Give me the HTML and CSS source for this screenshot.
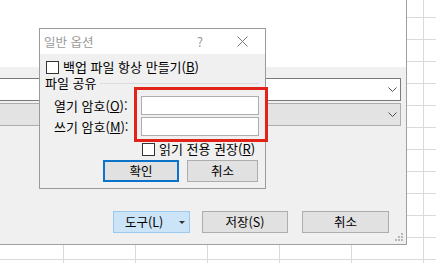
FILE: index.html
```html
<!DOCTYPE html>
<html lang="ko">
<head>
  <meta charset="UTF-8" />
  <title>일반 옵션</title>
  <link rel="stylesheet" href="styles.css">
</head>
<body>
  <div class="save-dialog">
    <div class="file-area"></div>
    <div class="save-panel">
      <div class="combo combo-active">
        <svg class="chevron" width="9" height="5" viewBox="0 0 9 5"><path d="M0.5 0.5 L4.5 4.5 L8.5 0.5" fill="none" stroke="#505050" stroke-width="1"/></svg>
      </div>
      <div class="combo combo-disabled">
        <svg class="chevron" width="9" height="5" viewBox="0 0 9 5"><path d="M0.5 0.5 L4.5 4.5 L8.5 0.5" fill="none" stroke="#505050" stroke-width="1"/></svg>
      </div>
      <div class="save-buttons">
        <button class="btn btn-tools"><span>도구(L)</span><span class="caret"></span></button>
        <button class="btn btn-save">저장(S)</button>
        <button class="btn btn-cancel">취소</button>
      </div>
      <svg class="grip" width="9" height="9" viewBox="0 0 9 9">
        <rect x="6" y="0" width="2" height="2" fill="#b8b8b8"/>
        <rect x="3" y="3" width="2" height="2" fill="#b8b8b8"/>
        <rect x="6" y="3" width="2" height="2" fill="#b8b8b8"/>
        <rect x="0" y="6" width="2" height="2" fill="#b8b8b8"/>
        <rect x="3" y="6" width="2" height="2" fill="#b8b8b8"/>
        <rect x="6" y="6" width="2" height="2" fill="#b8b8b8"/>
      </svg>
    </div>
  </div>

  <div class="options-dialog">
    <div class="title-bar">
      <span class="title">일반 옵션</span>
      <span class="help">?</span>
      <svg class="close" width="11" height="11" viewBox="0 0 11 11"><path d="M0.5 0.5 L10.5 10.5 M10.5 0.5 L0.5 10.5" stroke="#777" stroke-width="1"/></svg>
    </div>
    <div class="dialog-body">
      <div class="check-row">
        <span class="checkbox"></span>
        <span>백업 파일 항상 만들기(<u>B</u>)</span>
      </div>
      <div class="group-title"><span>파일 공유</span></div>
      <div class="password-grid">
        <span class="pw-label">열기 암호(<u>O</u>):</span>
        <span class="pw-input"></span>
        <span class="pw-label">쓰기 암호(<u>M</u>):</span>
        <span class="pw-input"></span>
      </div>
      <div class="check-row readonly">
        <span class="checkbox"></span>
        <span>읽기 전용 권장(<u>R</u>)</span>
      </div>
      <div class="dialog-buttons">
        <button class="btn btn-ok">확인</button>
        <button class="btn btn-no">취소</button>
      </div>
    </div>
  </div>

  <div class="highlight"></div>
</body>
</html>
```

FILE: styles.css
```css
body {
  margin: 0;
  width: 436px;
  height: 263px;
  overflow: hidden;
  position: relative;
  font-family: "Noto Sans CJK KR", "Noto Sans", sans-serif;
  font-size: 12px;
  color: #000;
  background-color: #fff;
  background-image:
    linear-gradient(to right, #dadada 1px, transparent 1px),
    linear-gradient(to bottom, #dadada 1px, transparent 1px);
  background-size: 72px 22px;
  background-position: 63px 17px;
}

/* save-as dialog behind */
.save-dialog {
  width: 406px;
  height: 244px;
  border-right: 1px solid #a0a0a0;
  border-bottom: 1px solid #a0a0a0;
  background: #f0f0f0;
  display: flex;
  flex-direction: column;
}
.file-area {
  height: 67px;
  background: #fff;
}
.save-panel {
  flex: 1;
  position: relative;
  padding-top: 11px;
}
.combo {
  box-sizing: border-box;
  width: 403px;
  height: 23px;
  margin-left: -2px;
  display: flex;
  justify-content: flex-end;
  align-items: center;
  padding-right: 3px;
}
.combo-active {
  background: #fff;
  border: 1px solid #7a7a7a;
}
.combo-disabled {
  margin-top: 2px;
  background: #e3e3e3;
  border: 1px solid #adadad;
}
.save-buttons {
  display: flex;
  justify-content: flex-end;
  margin-top: 85px;
  padding-right: 17px;
}
.btn {
  box-sizing: border-box;
  height: 22px;
  padding: 0;
  font-family: inherit;
  font-size: 12.5px;
  line-height: 16px;
  color: #000;
  background: #e1e1e1;
  border: 1px solid #adadad;
}
.btn-tools {
  width: 77px;
  background: #cce4f7;
  border-color: #9ccaee;
  display: flex;
  align-items: center;
  padding-left: 11px;
}
.caret {
  margin-left: 16px;
  width: 0;
  height: 0;
  border-left: 3px solid transparent;
  border-right: 3px solid transparent;
  border-top: 3px solid #333;
}
.btn-save {
  width: 86px;
  margin-left: 12px;
}
.btn-cancel {
  width: 87px;
  margin-left: 14px;
}
.grip {
  position: absolute;
  right: 2px;
  bottom: 2px;
}

/* general options dialog */
.options-dialog {
  position: absolute;
  left: 39px;
  top: 28px;
  width: 227px;
  height: 161px;
  box-sizing: border-box;
  border: 1px solid #9a9a9a;
  background: #f0f0f0;
}
.title-bar {
  height: 25px;
  background: #fff;
  display: flex;
  align-items: center;
  padding-left: 4px;
  padding-right: 17px;
  font-size: 12.5px;
}
.title {
  color: #999;
}
.help {
  margin-left: auto;
  margin-right: 34px;
  color: #999;
}
.dialog-body {
  padding: 0 6px;
  font-size: 13px;
  line-height: 16px;
}
.check-row {
  height: 16px;
  margin-top: 5px;
  display: flex;
  align-items: center;
}
.checkbox {
  box-sizing: border-box;
  width: 13px;
  height: 13px;
  margin-right: 4px;
  border: 1px solid #333;
  background: #fff;
}
.group-title {
  height: 16px;
  margin-left: -1px;
  display: flex;
  align-items: center;
}
.group-title::after {
  content: "";
  flex: 1;
  height: 1px;
  margin-left: 4px;
  background: #dcdcdc;
}
.password-grid {
  display: grid;
  grid-template-columns: 87px 118px;
  grid-auto-rows: 19px;
  row-gap: 2px;
  margin-top: 5px;
  margin-left: 8px;
}
.pw-label {
  display: flex;
  align-items: center;
}
.pw-input {
  box-sizing: border-box;
  background: #fff;
  border: 1px solid #adadad;
}
.readonly {
  margin-left: 96px;
}
.dialog-buttons {
  display: flex;
  margin-top: 3px;
  margin-left: 57px;
}
.btn-ok {
  width: 76px;
  border: 2px solid #0b73c9;
}
.btn-no {
  width: 71px;
  margin-left: 8px;
}

/* red annotation box */
.highlight {
  position: absolute;
  left: 134px;
  top: 87px;
  width: 134px;
  height: 55px;
  box-sizing: border-box;
  border: 3px solid #e2231a;
}
```
